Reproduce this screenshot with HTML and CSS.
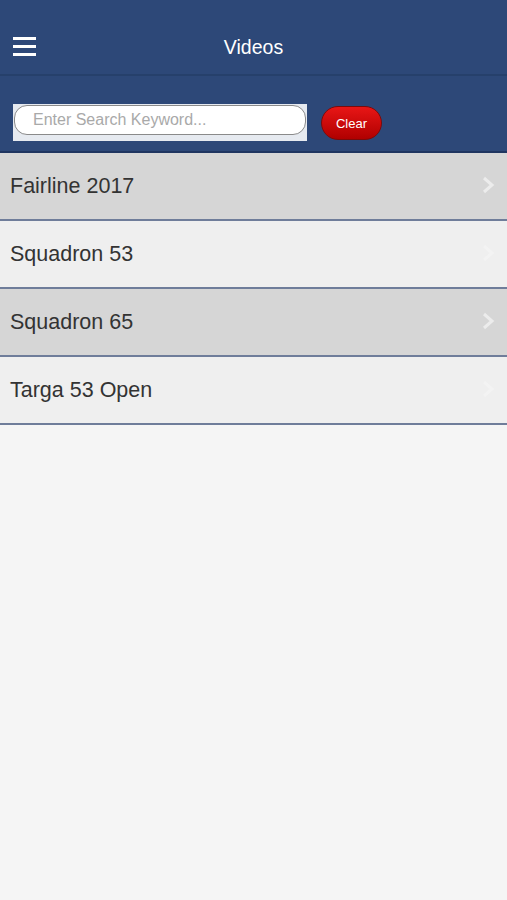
FILE: index.html
```html
<!DOCTYPE html>
<html>
<head>
<meta charset="utf-8">
<link rel="stylesheet" href="styles.css">
</head>
<body>
<header class="topbar">
  <div class="menu-btn" aria-label="menu"><span></span><span></span><span></span></div>
  <div class="title">Videos</div>
</header>
<div class="searchbar">
  <div class="search-wrap">
    <div class="search-input">Enter Search Keyword...</div>
  </div>
  <div class="clear-btn">Clear</div>
</div>
<ul class="list">
  <li class="row dark"><span>Fairline 2017</span><svg class="chev" viewBox="0 0 14 18" width="14" height="18"><path d="M3 2 L11 9 L3 16" fill="none" stroke-width="3"/></svg></li>
  <li class="row light"><span>Squadron 53</span><svg class="chev" viewBox="0 0 14 18" width="14" height="18"><path d="M3 2 L11 9 L3 16" fill="none" stroke-width="3"/></svg></li>
  <li class="row dark"><span>Squadron 65</span><svg class="chev" viewBox="0 0 14 18" width="14" height="18"><path d="M3 2 L11 9 L3 16" fill="none" stroke-width="3"/></svg></li>
  <li class="row light"><span>Targa 53 Open</span><svg class="chev" viewBox="0 0 14 18" width="14" height="18"><path d="M3 2 L11 9 L3 16" fill="none" stroke-width="3"/></svg></li>
</ul>
</body>
</html>
```
FILE: styles.css
```css
* { box-sizing: border-box; }
html, body { margin: 0; padding: 0; }
body {
  background: #f5f5f5;
  font-family: "Liberation Sans", Arial, sans-serif;
  width: 507px;
  min-height: 900px;
}
.topbar {
  position: relative;
  height: 76px;
  background: #2d4878;
  border-bottom: 2px solid #26406b;
  display: flex;
  align-items: center;
  justify-content: center;
}
.menu-btn {
  position: absolute;
  left: 13px;
  top: 37px;
  width: 23px;
  display: flex;
  flex-direction: column;
  gap: 5px;
}
.menu-btn span {
  display: block;
  height: 3px;
  background: #fff;
}
.title {
  color: #fff;
  font-size: 19.5px;
  padding-top: 20px;
}
.searchbar {
  height: 77px;
  background: #2d4878;
  display: flex;
  align-items: flex-start;
  padding: 28px 0 0 13px;
  border-bottom: 2px solid #1f3560;
}
.search-wrap {
  width: 294px;
  height: 37px;
  background: #e6eaf0;
  padding: 1px;
}
.search-input {
  height: 30px;
  background: #fff;
  border: 1.5px solid #8a8a8a;
  border-radius: 13px;
  color: #a9a9a9;
  font-size: 16px;
  line-height: 27px;
  padding-left: 18px;
}
.clear-btn {
  margin-left: 14px;
  margin-top: 2px;
  width: 61px;
  height: 34px;
  border-radius: 17px;
  background: linear-gradient(#e81616, #b00000);
  border: 1.5px solid #7d0a0a;
  color: #fff;
  font-size: 13px;
  display: flex;
  align-items: center;
  justify-content: center;
}
.list {
  list-style: none;
  margin: 0;
  padding: 0;
}
.row {
  height: 68px;
  display: flex;
  align-items: center;
  justify-content: space-between;
  padding: 0 12px 0 10px;
  font-size: 21.5px;
  color: #333;
  border-bottom: 2px solid #6f7d9a;
}
.row.dark { background: #d6d6d6; }
.row.light { background: #efefef; }
.row .chev { margin-bottom: 2px; }
.row.dark .chev path { stroke: #ececec; }
.row.light .chev path { stroke: #f3f3f3; }
```
